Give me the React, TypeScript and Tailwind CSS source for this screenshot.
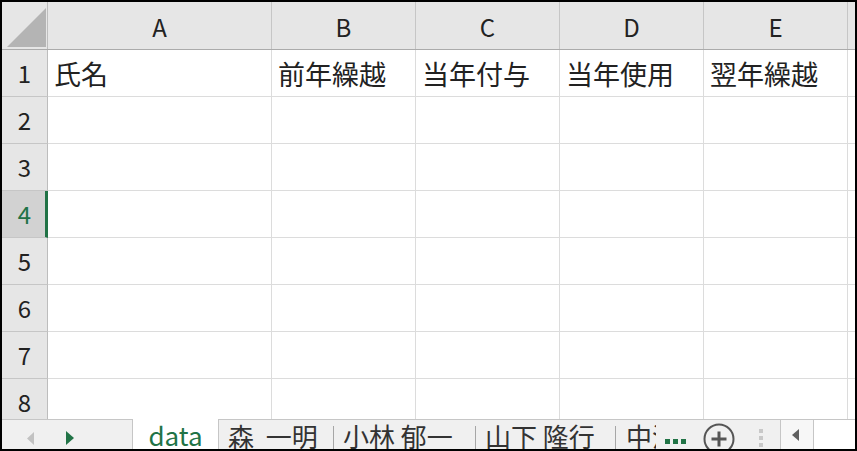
import React from 'react';

const font = { fontFamily: '"Noto Sans CJK JP", "Noto Sans", sans-serif' };

interface Col {
  key: string;
  width: string;
  title: string;
}

const columns: Col[] = [
  { key: 'A', width: 'w-[224px]', title: '氏名' },
  { key: 'B', width: 'w-[144px]', title: '前年繰越' },
  { key: 'C', width: 'w-[144px]', title: '当年付与' },
  { key: 'D', width: 'w-[144px]', title: '当年使用' },
  { key: 'E', width: 'w-[144px]', title: '翌年繰越' },
];

const rows = [1, 2, 3, 4, 5, 6, 7, 8];
const selectedRow = 4;

function CornerCell() {
  return (
    <div className="w-[46px] shrink-0 border-r border-[#bdbdbd] relative">
      <svg className="absolute left-[5px] top-[6px]" width="39" height="39" viewBox="0 0 39 39">
        <polygon points="39,0 39,39 0,39" fill="#b4b4b4" />
      </svg>
    </div>
  );
}

function SheetTabs() {
  return (
    <div className="h-[30px] shrink-0 flex bg-[#f0f0f0] border-t border-[#c6c6c6] text-[#333]" style={font}>
      {/* nav arrows */}
      <div className="w-[130px] shrink-0 relative">
        <svg className="absolute left-[25px] top-[12px]" width="8" height="13" viewBox="0 0 8 13">
          <polygon points="7,0 7,13 0,6.5" fill="#c2c2c2" />
        </svg>
        <svg className="absolute left-[64px] top-[11px]" width="8" height="14" viewBox="0 0 8 14">
          <polygon points="0,0 8,7 0,14" fill="#217346" />
        </svg>
      </div>

      {/* active tab */}
      <div className="w-[87px] shrink-0 -mt-px bg-white border-x border-[#c6c6c6] flex items-end justify-center text-[26px] leading-[30px] text-[#217346]">
        <span className="-mb-[1px]">data</span>
      </div>

      <div className="w-[114px] shrink-0 flex items-end pl-[9px] text-[26px] leading-[30px] whitespace-nowrap overflow-hidden">
        <span className="-mb-[2px]">森&nbsp;&nbsp;一明</span>
      </div>
      <div className="w-px h-[23px] self-end bg-[#a6a6a6] shrink-0" />
      <div className="w-[141px] shrink-0 flex items-end pl-[9px] text-[26px] leading-[30px] whitespace-nowrap overflow-hidden">
        <span className="-mb-[2px]">小林 郁一</span>
      </div>
      <div className="w-px h-[23px] self-end bg-[#a6a6a6] shrink-0" />
      <div className="w-[139px] shrink-0 flex items-end pl-[9px] text-[26px] leading-[30px] whitespace-nowrap overflow-hidden">
        <span className="-mb-[2px]">山下 隆行</span>
      </div>
      <div className="w-px h-[23px] self-end bg-[#a6a6a6] shrink-0" />
      <div className="w-[40px] shrink-0 flex items-end pl-[10px] text-[26px] leading-[30px] whitespace-nowrap overflow-hidden">
        <span className="-mb-[2px]">中沢</span>
      </div>

      {/* more */}
      <div className="w-[47px] shrink-0 flex items-end gap-[3px] pl-[9px] pb-[5px]">
        <span className="w-[5px] h-[5px] bg-[#217346]" />
        <span className="w-[5px] h-[5px] bg-[#217346]" />
        <span className="w-[5px] h-[5px] bg-[#217346]" />
      </div>

      {/* add sheet */}
      <div className="w-[40px] shrink-0 relative">
        <svg className="absolute left-0 top-[3px]" width="32" height="32" viewBox="0 0 32 32">
          <circle cx="16" cy="16" r="14.5" fill="none" stroke="#555" strokeWidth="2" />
          <path d="M16 8.5v15M8.5 16h15" stroke="#555" strokeWidth="3" />
        </svg>
      </div>

      {/* splitter */}
      <div className="w-[37px] shrink-0 flex flex-col items-center gap-[3px] pt-[9px] pr-[2px]">
        <span className="w-[4px] h-[4px] bg-[#c8c8c8]" />
        <span className="w-[4px] h-[4px] bg-[#c8c8c8]" />
        <span className="w-[4px] h-[4px] bg-[#c8c8c8]" />
      </div>

      {/* horizontal scrollbar */}
      <div className="w-[34px] shrink-0 border-x border-[#c6c6c6] bg-[#f7f7f7] relative">
        <svg className="absolute left-[11px] top-[9px]" width="7" height="12" viewBox="0 0 7 12">
          <polygon points="7,0 7,12 0,6" fill="#606060" />
        </svg>
      </div>
      <div className="flex-1 bg-white" />
    </div>
  );
}

export default function App() {
  return (
    <div className="w-[857px] h-[451px] border-2 border-black bg-white flex flex-col overflow-hidden text-[#222]" style={font}>
      <div className="flex-1 overflow-hidden">
        {/* column headers */}
        <div className="h-[48px] flex bg-[#e6e6e6] border-b border-[#ababab]">
          <CornerCell />
          {columns.map(col => (
            <div
              key={col.key}
              className={`${col.width} shrink-0 border-r border-[#c6c6c6] flex items-center justify-center text-[24px] pt-[2px]`}
            >
              {col.key}
            </div>
          ))}
          <div className="flex-1" />
        </div>

        {rows.map(r => {
          const selected = r === selectedRow;
          return (
            <div key={r} className="h-[47px] flex">
              <div
                className={`w-[46px] shrink-0 flex items-center justify-center text-[24px] border-b ${
                  selected
                    ? 'bg-[#d2d2d2] text-[#217346] border-r-[3px] border-r-[#217346] border-b-[#c6c6c6] pl-[2px]'
                    : 'bg-[#e6e6e6] border-r border-[#bdbdbd] border-b-[#c6c6c6]'
                }`}
              >
                {r}
              </div>
              {columns.map(col => (
                <div
                  key={col.key}
                  className={`${col.width} shrink-0 border-r border-b border-[#dcdcdc] flex items-center pl-[6px] text-[27px] leading-none whitespace-nowrap`}
                >
                  {r === 1 ? col.title : ''}
                </div>
              ))}
              <div className="flex-1 border-b border-[#dcdcdc]" />
            </div>
          );
        })}
      </div>
      <SheetTabs />
    </div>
  );
}
